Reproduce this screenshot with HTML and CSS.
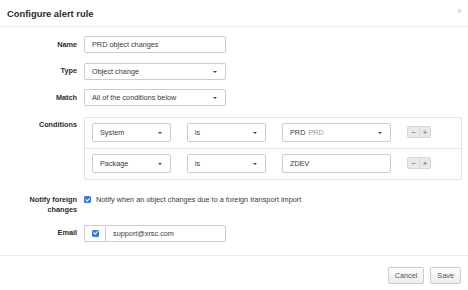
FILE: index.html
```html
<!DOCTYPE html>
<html lang="en">
<head>
    <meta charset="UTF-8">
    <meta name="viewport" content="width=device-width, initial-scale=1.0">
    <title>Configure alert rule</title>
    <link rel="stylesheet" href="styles.css">
</head>
<body>
    <div class="modal">
        <div class="modal-header">
            <h3>Configure alert rule</h3>
            <span class="modal-close">&times;</span>
        </div>

        <div class="modal-body">
            <div class="form">
                <label class="label">Name</label>
                <div class="control"><div class="input w-main">PRD object changes</div></div>

                <label class="label">Type</label>
                <div class="control"><div class="input select w-main">Object change</div></div>

                <label class="label">Match</label>
                <div class="control"><div class="input select w-main">All of the conditions below</div></div>

                <label class="label label-top">Conditions</label>
                <div class="control">
                    <div class="conditions">
                        <div class="condition">
                            <div class="input select w-field">System</div>
                            <div class="input select w-field">is</div>
                            <div class="input select w-value">PRD <span class="muted">PRD</span></div>
                            <div class="btn-pair"><span>&minus;</span><span>+</span></div>
                        </div>
                        <div class="condition">
                            <div class="input select w-field">Package</div>
                            <div class="input select w-field">is</div>
                            <div class="input w-value">ZDEV</div>
                            <div class="btn-pair"><span>&minus;</span><span>+</span></div>
                        </div>
                    </div>
                </div>

                <label class="label label-notify">Notify foreign changes</label>
                <div class="control check-row">
                    <span class="checkbox"></span>
                    <span>Notify when an object changes due to a foreign transport import</span>
                </div>

                <label class="label">Email</label>
                <div class="control">
                    <div class="input-group w-main">
                        <span class="addon"><span class="checkbox"></span></span>
                        <div class="input">support@xrsc.com</div>
                    </div>
                </div>
            </div>
        </div>

        <div class="modal-footer">
            <button class="btn">Cancel</button>
            <button class="btn">Save</button>
        </div>
    </div>
</body>
</html>
```

FILE: styles.css
```css
* {
    margin: 0;
    padding: 0;
    box-sizing: border-box;
    font-family: "Liberation Sans", Arial, sans-serif;
}

body, html {
    width: 100%;
    height: 100%;
    background: #ffffff;
    color: #333333;
    font-size: 7.3px;
    overflow: hidden;
}

.modal {
    width: 468px;
    height: 290px;
    display: flex;
    flex-direction: column;
}

.modal-header {
    height: 27px;
    padding: 0 6px 0 7px;
    display: flex;
    align-items: center;
    justify-content: space-between;
    border-bottom: 1px solid #ececec;
}

.modal-header h3 {
    font-size: 9.4px;
    font-weight: bold;
    color: #2b2b2b;
}

.modal-close {
    font-size: 9px;
    color: #c4c4c4;
    margin-top: -5px;
}

.modal-body {
    padding: 9px 6px 0 8px;
    height: 228px;
}

.form {
    display: grid;
    grid-template-columns: 69px 1fr;
    column-gap: 7px;
    row-gap: 9.5px;
}

.label {
    font-weight: bold;
    text-align: right;
    line-height: 10px;
    align-self: center;
    color: #2b2b2b;
}

.label-top {
    align-self: start;
    padding-top: 4px;
}

.label-notify {
    align-self: start;
    padding-top: 6px;
}

.input {
    height: 17px;
    border: 1px solid #cccccc;
    border-radius: 2px;
    padding: 0 7px;
    display: flex;
    align-items: center;
    color: #3a3a3a;
    background: #ffffff;
    white-space: nowrap;
}

.select {
    position: relative;
}

.select::after {
    content: "";
    position: absolute;
    right: 8px;
    top: 7px;
    border-left: 2px solid transparent;
    border-right: 2px solid transparent;
    border-top: 2.5px solid #444444;
}

.w-main { width: 142px; }
.w-field { width: 79px; }
.w-value { width: 109px; }

.muted {
    color: #999999;
    margin-left: 3px;
}

.conditions {
    border: 1px solid #e3e3e3;
    border-radius: 2px;
    margin-top: 1px;
}

.condition {
    display: flex;
    align-items: center;
    gap: 16px;
    padding: 5px 7px 6px;
}

.condition + .condition {
    border-top: 1px solid #e3e3e3;
}

.condition .input {
    height: 19px;
}

.condition .select::after {
    top: 8px;
}

.btn-pair {
    display: flex;
    height: 12px;
    border: 1px solid #d6d6d6;
    border-radius: 2px;
    background: #e9e9e9;
}

.btn-pair span {
    width: 11px;
    display: flex;
    align-items: center;
    justify-content: center;
    font-size: 7px;
    font-weight: bold;
    color: #888888;
}

.btn-pair span + span {
    border-left: 1px solid #d6d6d6;
}

.check-row {
    display: flex;
    align-items: flex-start;
    gap: 5px;
    padding-top: 6px;
    line-height: 9px;
    color: #3a3a3a;
}

.checkbox {
    width: 7px;
    height: 7px;
    margin-top: 1px;
    border-radius: 1.5px;
    background: #2f7cf0;
    position: relative;
    flex-shrink: 0;
}

.checkbox::after {
    content: "";
    position: absolute;
    left: 2.3px;
    top: 0.8px;
    width: 1.5px;
    height: 3.2px;
    border-right: 1px solid #ffffff;
    border-bottom: 1px solid #ffffff;
    transform: rotate(40deg);
}

.input-group {
    display: flex;
    height: 17px;
}

.addon {
    width: 21px;
    border: 1px solid #cccccc;
    border-right: none;
    border-radius: 2px 0 0 2px;
    display: flex;
    align-items: center;
    justify-content: center;
}

.addon .checkbox {
    margin-top: 0;
}

.input-group .input {
    flex: 1;
    height: 17px;
    border-radius: 0 2px 2px 0;
}

.modal-footer {
    border-top: 1px solid #ececec;
    display: flex;
    justify-content: flex-end;
    gap: 6px;
    padding: 11px 7px 0;
}

.btn {
    height: 17px;
    padding: 0 6px;
    border: 1px solid #cccccc;
    border-radius: 2px;
    background: linear-gradient(#ffffff, #ececec);
    color: #555555;
    font-size: 7.3px;
    cursor: pointer;
}
```
